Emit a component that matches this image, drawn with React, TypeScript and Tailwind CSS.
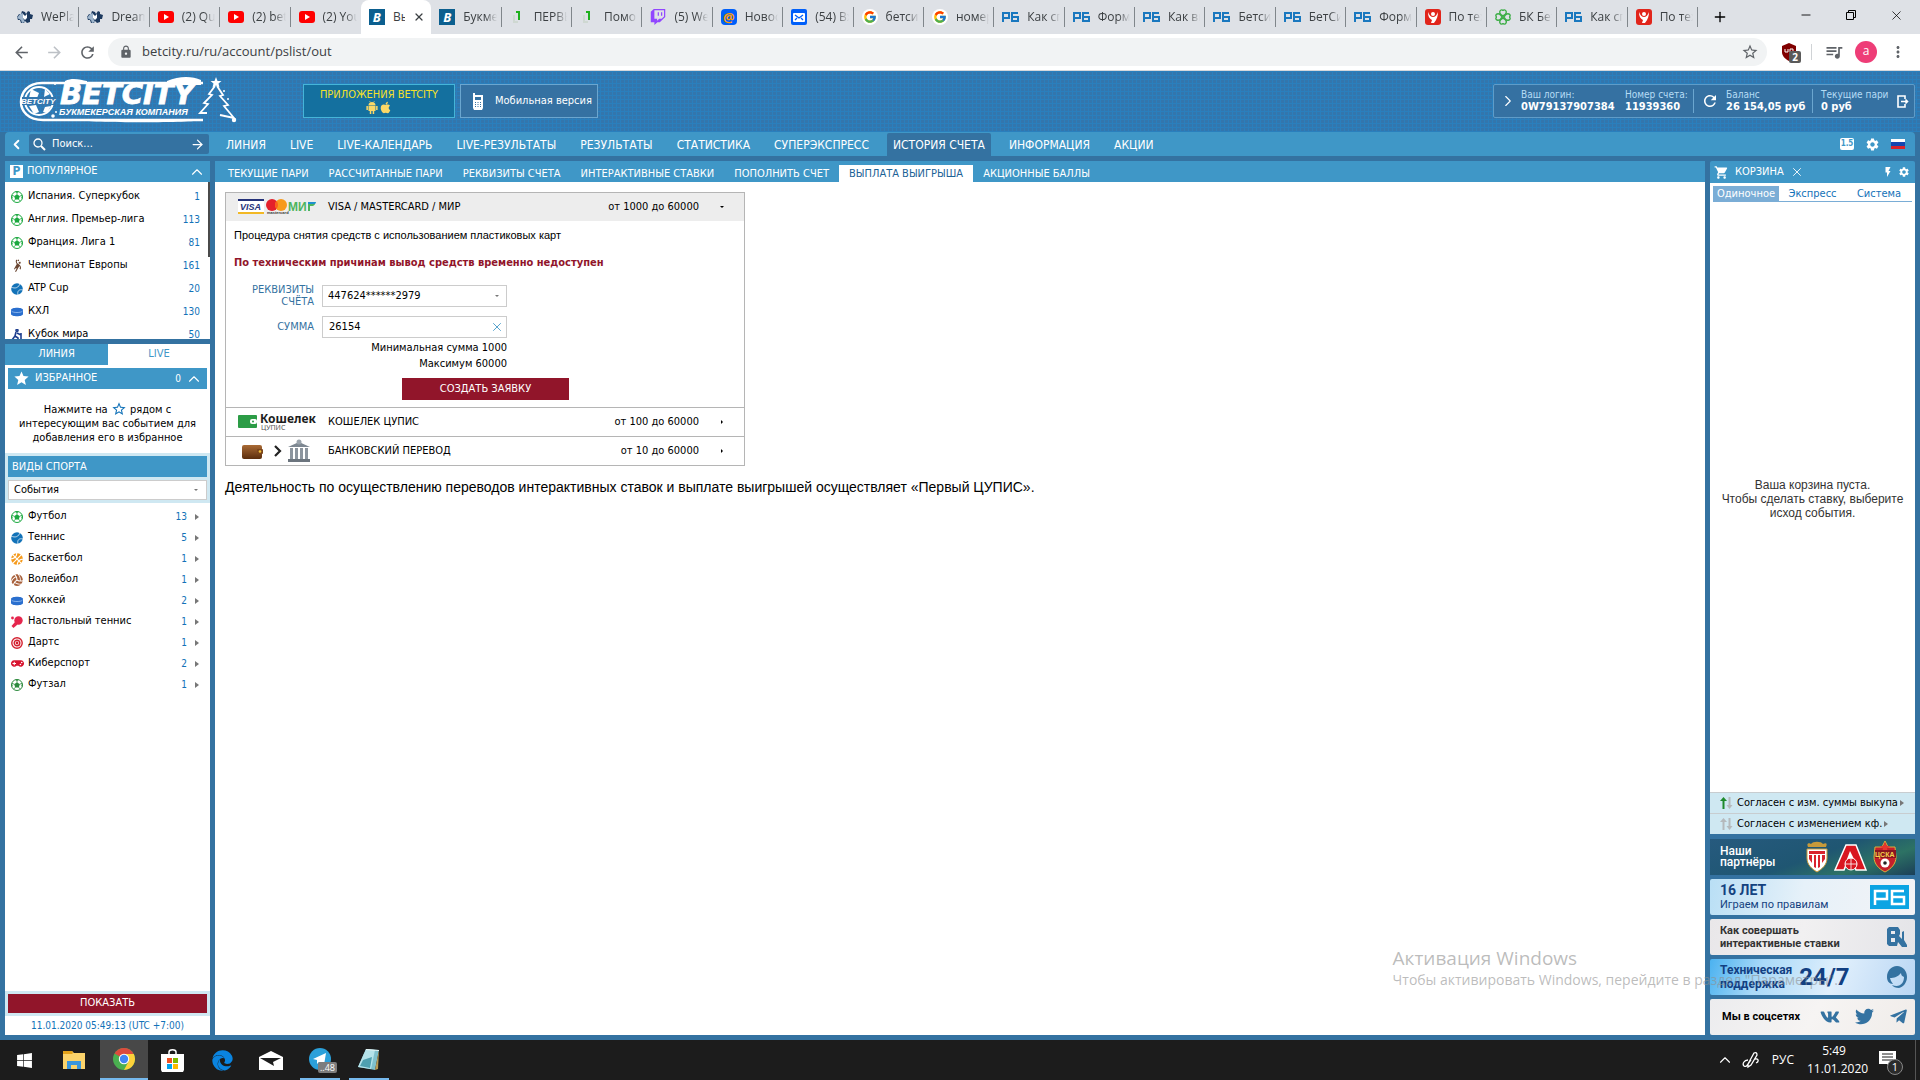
import React from 'react'
import {
    FaApple, FaBasketballBall, FaEdge, FaGamepad, FaTableTennis,
    FaTelegramPlane, FaTwitter, FaVk, FaVolleyballBall, FaWindows, FaTwitch,
} from 'react-icons/fa'
import { FcGoogle } from 'react-icons/fc'
import {
    MdArrowBack, MdArrowForward, MdFlashOn, MdLock, MdMoreVert, MdQueueMusic,
    MdRefresh, MdSettings, MdShoppingCart, MdSportsHandball, MdStar, MdStarBorder,
} from 'react-icons/md'
import { ChevronLeft, ChevronRight, ChevronUp, Plus, X, ArrowRight, Minus } from 'lucide-react'

/* ---------- favicons ---------- */

const Paw = () => (
    <svg width="16" height="16" viewBox="0 0 16 16">
        <path d="M0 8l2-3 2 0 1-3 3 1 1 2 2-3 2 1 0 2 3 1-1 4-2 0 0 3-3 1-2-2-1 2-3 0-1-3-2 0z" fill="#1d3a5f" />
        <path d="M0 9l3-4 3-1 0 5 2 4-3 1-1-3z" fill="#9fb6cd" />
        <path d="M6 5l2 2 2-2 0 4-2 2-2-2z" fill="#fff" />
    </svg>
)
const YouTube = () => (
    <svg width="16" height="16" viewBox="0 0 16 16">
        <rect y="2" width="16" height="12" rx="3" fill="#f00" />
        <path d="M6 5l5 3-5 3z" fill="#fff" />
    </svg>
)
const BetB = () => (
    <span className="flex h-4 w-4 items-center justify-center bg-[#0b5f8f] text-[13px] leading-4 font-bold text-white italic">B</span>
)
const One = () => (
    <svg width="16" height="16" viewBox="0 0 16 16">
        <path d="M6 2h4v9H8V4H6z" fill="#1fb11f" />
        <path d="M4 6v7h4" fill="none" stroke="#cfd8d2" strokeWidth="2" />
    </svg>
)
const MailAt = () => (
    <span className="flex h-4 w-4 items-center justify-center rounded-sm bg-[#005ff9] text-[13px] leading-4 font-bold text-[#ff9e00]">@</span>
)
const Mail = () => (
    <svg width="16" height="16" viewBox="0 0 16 16">
        <rect width="16" height="16" rx="2" fill="#005ff9" />
        <rect x="2" y="4" width="12" height="9" rx="1" fill="#fff" />
        <path d="M4 6l4 3 4-3M4 11l2-2M12 11l-2-2" fill="none" stroke="#005ff9" strokeWidth="1.3" />
    </svg>
)
const Google = () => (
    <span className="flex h-4 w-4 items-center justify-center rounded-full bg-white"><FcGoogle size={14} /></span>
)
const Rb = () => (
    <svg width="17" height="16" viewBox="0 0 17 16" fill="none" stroke="#1a78bf" strokeWidth="2">
        <path d="M1 13V4h6v5H1M16 4h-6v8h6V8h-6" />
    </svg>
)
const Red = () => (
    <svg width="16" height="16" viewBox="0 0 16 16">
        <rect width="16" height="16" rx="3" fill="#e1251b" />
        <circle cx="8" cy="5" r="2" fill="#fff" />
        <path d="M3 3c0 5 2 7 4 8l-1 3h3c3-4 4-7 4-11-1 3-3 5-5 5S4 6 3 3z" fill="#fff" />
    </svg>
)
const Clover = () => (
    <svg width="16" height="16" viewBox="0 0 16 16" fill="none" stroke="#3fae49" strokeWidth="1.4">
        <path d="M8 7C6 6 4 4 5 2s3-1 3 0c0-1 2-2 3 0s-1 4-3 5zM8 9c-2 1-4 3-3 5s3 1 3 0c0 1 2 2 3 0s-1-4-3-5zM7 8C6 6 4 4 2 5s-1 3 0 3c-1 0-2 2 0 3s4-1 5-3zM9 8c1-2 3-4 5-3s1 3 0 3c1 0 2 2 0 3s-4-1-5-3z" />
    </svg>
)
const Twitch = () => <FaTwitch size={16} color="#9146ff" />

const tabs = [
    { icon: Paw, title: 'WePlay' },
    { icon: Paw, title: 'DreamH' },
    { icon: YouTube, title: '(2) Que' },
    { icon: YouTube, title: '(2) betc' },
    { icon: YouTube, title: '(2) You' },
    { icon: BetB, title: 'Вы', active: true },
    { icon: BetB, title: 'Букмек' },
    { icon: One, title: 'ПЕРВЫ' },
    { icon: One, title: 'Помощ' },
    { icon: Twitch, title: '(5) We' },
    { icon: MailAt, title: 'Новос' },
    { icon: Mail, title: '(54) Вх' },
    { icon: Google, title: 'бетсит' },
    { icon: Google, title: 'номер' },
    { icon: Rb, title: 'Как сп' },
    { icon: Rb, title: 'Форма' },
    { icon: Rb, title: 'Как вы' },
    { icon: Rb, title: 'Бетсит' },
    { icon: Rb, title: 'БетСит' },
    { icon: Rb, title: 'Форма' },
    { icon: Red, title: 'По тех' },
    { icon: Clover, title: 'БК Бет' },
    { icon: Rb, title: 'Как сп' },
    { icon: Red, title: 'По тех' },
]

const BrowserChrome = () => (
    <div className="font-['Open_Sans',sans-serif]">
        <div className="flex h-[34px] bg-[#dee1e6] pl-[9px] text-xs text-[#3c4043]">
            <div className="flex min-w-0 flex-1">
                {tabs.map(({ icon: Icon, title, active }, i) => (
                    <div key={i} className={active
                        ? 'flex min-w-0 flex-1 items-center rounded-t-lg bg-white pl-2'
                        : 'flex min-w-0 flex-1 items-center py-[7px] pl-2'}>
                        <span className="mr-2 shrink-0"><Icon /></span>
                        <span className={active
                            ? 'mr-2 w-3 overflow-hidden whitespace-nowrap'
                            : 'mr-1 flex-1 overflow-hidden whitespace-nowrap [mask-image:linear-gradient(to_right,black_65%,transparent)]'}>{title}</span>
                        {active
                            ? <button aria-label="Закрыть вкладку"><X size={12} strokeWidth={2.5} /></button>
                            : i !== 4 && <span className="h-5 w-px shrink-0 bg-[#80868b]" />}
                    </div>
                ))}
            </div>
            <div className="flex w-[222px] items-center justify-between pr-4 pl-[14px] text-black">
                <button aria-label="Новая вкладка"><Plus size={16} /></button>
                <div className="flex items-center gap-8 pb-1">
                    <button aria-label="Свернуть"><Minus size={14} strokeWidth={1.5} /></button>
                    <button aria-label="Окно">
                        <svg width="12" height="12" viewBox="0 0 12 12" fill="none" stroke="#000">
                            <path d="M1.5 3.5h7v7h-7zM3.5 3V1.5h7v7H9" />
                        </svg>
                    </button>
                    <button aria-label="Закрыть"><X size={15} strokeWidth={1.2} /></button>
                </div>
            </div>
        </div>
        <div className="flex h-[37px] items-center border-b border-[#d5d8dc] bg-white text-[#5f6368]">
            <div className="flex w-[108px] items-center gap-[14px] pl-3">
                <button aria-label="Назад"><MdArrowBack size={19} /></button>
                <button aria-label="Вперёд" className="text-[#bdc1c6]"><MdArrowForward size={19} /></button>
                <button aria-label="Обновить"><MdRefresh size={19} /></button>
            </div>
            <div className="flex h-7 flex-1 items-center rounded-full bg-[#f1f3f4] pr-2 pl-[11px]">
                <MdLock size={14} />
                <input aria-label="Адрес" className="ml-[9px] flex-1 bg-transparent text-[13px] text-[#3c4043] outline-none" defaultValue="betcity.ru/ru/account/pslist/out" />
                <MdStarBorder size={18} />
            </div>
            <div className="flex w-[153px] items-center pl-[14px]">
                <span className="relative flex w-[22px]">
                    <svg width="16" height="18" viewBox="0 0 16 18">
                        <path d="M8 0l7 3v6c0 4-3 7-7 9-4-2-7-5-7-9V3z" fill="#800000" />
                        <path d="M4 6v3h3V6M9 6h3v3H9z" fill="none" stroke="#fff" />
                    </svg>
                    <span className="absolute top-2 left-2 h-3 w-3 rounded-xs bg-[#5a5a5a] text-center text-[10px] leading-3 font-bold text-white">2</span>
                </span>
                <span className="mr-3 ml-2 h-4 w-px bg-[#d0d3d6]" />
                <MdQueueMusic size={20} />
                <span className="ml-[11px] h-[22px] w-[22px] rounded-full bg-[#ee3d77] text-center text-xs leading-5 text-white">a</span>
                <MdMoreVert size={18} className="ml-3" />
            </div>
        </div>
    </div>
)

/* ---------- site header ---------- */

const Logo = () => (
    <svg width="222" height="50" viewBox="0 0 222 50">
        <g fill="none" stroke="#fff" strokeWidth="2.5">
            <path d="M186 8H25C10 8 4 18 4 27s7 18 22 18h160" />
            <circle cx="22" cy="26" r="14" strokeWidth="2" />
            <path d="M190 38h-7l8-9-4-1 8-8-3-1 6-8M200 11l6 9-3 1 8 9-4 1 10 12-14-3" strokeWidth="1.8" />
        </g>
        <path d="M14 14l8 4-2 5h-8zM28 14l5 5-6 3zM12 31l7-1 3 7-5 2zM28 32l6-1-4 7-4-1z" fill="#fff" />
        <path d="M48 6c8-4 16-1 22 0v3H48zM150 6c12-5 25-5 34-1v5h-34zM60 44h80l40 1c4 3-110 3-120 0z" fill="#fff" />
        <path d="M199 2l1.5 4h4l-3 2.5 1 4-3.5-2-3.5 2 1-4-3-2.5h4z" fill="#fff" />
        <g fill="#fff">
            <circle cx="38" cy="9" r="1" /><circle cx="207" cy="16" r="1" /><circle cx="211" cy="24" r="1" />
            <circle cx="217" cy="45" r="2.2" /><circle cx="36" cy="41" r="1.8" /><circle cx="39" cy="37" r="1" />
        </g>
        <rect x="5" y="22" width="34" height="8" fill="#3376ad" />
        <text x="4" y="29" fill="#fff" fontSize="8" fontWeight="700" fontStyle="italic" fontFamily="Liberation Sans">BETCITY</text>
        <text x="43" y="29" fill="#fff" stroke="#fff" strokeWidth=".8" fontSize="29" fontWeight="700" fontStyle="italic" fontFamily="DejaVu Sans">BETCITY</text>
        <text x="42" y="40" fill="#fff" fontSize="9" fontWeight="700" fontStyle="italic" fontFamily="Liberation Sans">БУКМЕКЕРСКАЯ КОМПАНИЯ</text>
    </svg>
)

const Android = () => (
    <svg width="12" height="13" viewBox="0 0 12 13" fill="#fbd867">
        <path d="M2.5 4C2.5 0 9.500 0 9.500 4zM2.500 4.600h7V10h-7zM.4 5h1.500v4H.4zM10.100 5h1.500v4h-1.500zM3.800 10h1.500v3H3.800zM6.700 10h1.500v3H6.700z" />
        <path d="M3.500 0l1 1.500M8.500 0l-1 1.500" stroke="#fbd867" strokeWidth=".6" />
    </svg>
)

const Header = () => (
    <header className="flex h-[61px] items-start bg-[#3376ad] bg-[linear-gradient(#2a7fbd_1px,transparent_1px),linear-gradient(90deg,#2a7fbd_1px,transparent_1px)] bg-size-[4px_4px] pr-[5px] pl-[17px] text-[11px] text-white">
        <a href="#" aria-label="Betcity" className="w-[286px] pt-1"><Logo /></a>
        <div className="flex flex-1 gap-[5px] pt-[13px]">
            <button className="flex h-[34px] w-[152px] flex-col items-center justify-center border border-[#45b5d8] bg-[#14709f] leading-3 text-[#f5e02a]">
                ПРИЛОЖЕНИЯ BETCITY
                <span className="flex gap-px text-[#fbd867]"><Android /><FaApple size={13} /></span>
            </button>
            <button className="flex h-[34px] w-[138px] items-center gap-[11px] border border-[#6ba6cf] bg-[#3571a2] pl-[11px] whitespace-nowrap">
                <svg width="12" height="17" viewBox="0 0 12 17">
                    <path d="M1 0h2v2h8v13l-1 2H2l-1-2z" fill="#fff" />
                    <path d="M3 4h6v3H3zM3 9h1v1H3zM5.5 9h1v1h-1zM8 9h1v1H8zM3 11h1v1H3zM5.5 11h1v1h-1zM8 11h1v1H8zM3 13h1v1H3zM5.5 13h1v1h-1zM8 13h1v1H8z" fill="#3571a2" />
                </svg>
                Мобильная версия
            </button>
        </div>
        <div className="mt-[13px] flex h-[34px] items-center rounded-xs border border-[#5f9cc8] bg-[#3571a2] px-[5px] leading-3">
            <ChevronRight size={18} strokeWidth={1.5} />
            <div className="ml-1 w-[104px]"><div className="text-[10px] text-[#b5dcf5]">Ваш логин:</div><b>0W79137907384</b></div>
            <div className="w-[69px] border-r border-[#6ba6cf]"><div className="text-[10px] whitespace-nowrap text-[#b5dcf5]">Номер счета:</div><b>11939360</b></div>
            <button aria-label="Обновить баланс" className="mx-[7px]"><MdRefresh size={18} /></button>
            <div className="w-[87px] border-r border-[#6ba6cf]"><div className="text-[10px] text-[#b5dcf5]">Баланс</div><b>26 154,05 руб</b></div>
            <div className="ml-2 w-[76px]"><div className="text-[10px] whitespace-nowrap text-[#b5dcf5]">Текущие пари</div><b>0 руб</b></div>
            <button aria-label="Выход">
                <svg width="12" height="13" viewBox="0 0 12 13" fill="none" stroke="#fff" strokeWidth="1.6">
                    <path d="M8 4V1H1v11h7V9M4 6.5h6M8.5 4.5l2 2-2 2" />
                </svg>
            </button>
        </div>
    </header>
)

const menu = ['ЛИНИЯ', 'LIVE', 'LIVE-КАЛЕНДАРЬ', 'LIVE-РЕЗУЛЬТАТЫ', 'РЕЗУЛЬТАТЫ', 'СТАТИСТИКА', 'СУПЕРЭКСПРЕСС', 'ИСТОРИЯ СЧЕТА', 'ИНФОРМАЦИЯ', 'АКЦИИ']
const subMenu = ['ТЕКУЩИЕ ПАРИ', 'РАССЧИТАННЫЕ ПАРИ', 'РЕКВИЗИТЫ СЧЕТА', 'ИНТЕРАКТИВНЫЕ СТАВКИ', 'ПОПОЛНИТЬ СЧЕТ', 'ВЫПЛАТА ВЫИГРЫША', 'АКЦИОННЫЕ БАЛЛЫ']

const MainMenu = () => (
    <nav className="mx-[5px] mb-[5px] flex h-6 items-center rounded-t-sm bg-[#3f97c7] text-xs text-white">
        <button aria-label="Назад" className="w-6 pl-1"><ChevronLeft size={15} strokeWidth={3} /></button>
        <label className="flex h-5 w-[180px] items-center gap-1 rounded-xs bg-[#3472a1] px-1">
            <svg width="13" height="13" viewBox="0 0 13 13" fill="none" stroke="#fff">
                <circle cx="5" cy="5" r="4" strokeWidth="1.3" /><path d="M8 8l4 4" strokeWidth="2" />
            </svg>
            <input aria-label="Поиск" placeholder="Поиск..." className="min-w-0 flex-1 pl-[2px] text-[11px] outline-none placeholder:text-white" />
            <ArrowRight size={15} />
        </label>
        <div className="flex flex-1 items-end self-stretch pl-[5px]">
            {menu.map(item => (
                <a key={item} href="#" className={item === 'ИСТОРИЯ СЧЕТА'
                    ? 'mx-[6px] h-[23px] rounded-t-xs bg-[#3472a1] px-[6px] leading-6 whitespace-nowrap'
                    : 'mx-[6px] h-[23px] px-[6px] leading-6 whitespace-nowrap'}>{item}</a>
            ))}
        </div>
        <div className="flex items-center gap-[11px] pr-[10px]">
            <button className="h-3 w-[14px] rounded-xs bg-white text-[8px] leading-3 font-bold text-[#3f97c7]">1.5</button>
            <button aria-label="Настройки"><MdSettings size={15} /></button>
            <button aria-label="Русский" className="h-[10px] w-[14px] bg-[linear-gradient(#fff_33%,#1546b0_33%,#1546b0_66%,#d8232a_66%)]" />
        </div>
    </nav>
)

/* ---------- sport icons ---------- */

const Football = ({ color = '#1ba83f' }) => (
    <svg width="12" height="12" viewBox="0 0 12 12">
        <circle cx="6" cy="6" r="5.5" fill="#fff" stroke={color} />
        <path d="M6 3.200l2.800 2-1 3.300H4.200l-1-3.300z" fill={color} />
        <path d="M6 3.500V1M8.500 5.300l2.500-1M7.600 8.200l1.700 2M4.400 8.200l-1.700 2M3.500 5.300L1 4.300" stroke={color} strokeWidth=".8" />
        <path d="M4 .5h4L6 2zM.3 4.500L1.800 6l-1 2.200zM11.700 4.500L10.200 6l1 2.200z" fill={color} />
    </svg>
)
const Tennis = () => (
    <svg width="12" height="12" viewBox="0 0 12 12">
        <circle cx="6" cy="6" r="5.8" fill="#1272b8" />
        <path d="M0 4c4 2 8 1 9-4M7 12c-1-4 1-6 5-5" fill="none" stroke="#fff" strokeWidth=".7" />
    </svg>
)
const Puck = () => (
    <svg width="12" height="12" viewBox="0 0 12 12">
        <path d="M0 4c0-3 12-3 12 0v4c0 3-12 3-12 0z" fill="#2a6fce" />
        <path d="M.5 5c1 2 10 2 11 0" fill="none" stroke="#9cc3f2" strokeWidth=".8" />
    </svg>
)
const Skier = () => (
    <svg width="12" height="12" viewBox="0 0 12 12" fill="none" stroke="#1f3f8f" strokeWidth="1.6">
        <circle cx="6" cy="1.5" r="1" /><path d="M5 3L4 7l3 2v3M4 7l-3 4M6 4l4 2M10 4v8" />
    </svg>
)
const TableTennis = () => (
    <svg width="12" height="12" viewBox="0 0 12 12" fill="#e5264d">
        <circle cx="7.5" cy="4.5" r="4.2" /><circle cx="1.5" cy="2" r="1.4" />
        <path d="M4 6l2.500 2.500-4 3.500L.5 10z" />
    </svg>
)
const Darts = () => (
    <svg width="12" height="12" viewBox="0 0 12 12" fill="none" stroke="#d3202f" strokeWidth="1.4">
        <circle cx="6" cy="6" r="5.2" /><circle cx="6" cy="6" r="2.8" /><circle cx="6" cy="6" r=".7" />
    </svg>
)

const popular = [
    { icon: <Football />, name: 'Испания. Суперкубок', count: 1 },
    { icon: <Football />, name: 'Англия. Премьер-лига', count: 113 },
    { icon: <Football />, name: 'Франция. Лига 1', count: 81 },
    { icon: <MdSportsHandball size={13} color="#6b4632" />, name: 'Чемпионат Европы', count: 161 },
    { icon: <Tennis />, name: 'ATP Cup', count: 20 },
    { icon: <Puck />, name: 'КХЛ', count: 130 },
    { icon: <Skier />, name: 'Кубок мира', count: 50 },
]

const sports = [
    { icon: <Football />, name: 'Футбол', count: 13 },
    { icon: <Tennis />, name: 'Теннис', count: 5 },
    { icon: <FaBasketballBall size={12} color="#f59a1c" />, name: 'Баскетбол', count: 1 },
    { icon: <FaVolleyballBall size={12} color="#a8613c" />, name: 'Волейбол', count: 1 },
    { icon: <Puck />, name: 'Хоккей', count: 2 },
    { icon: <TableTennis />, name: 'Настольный теннис', count: 1 },
    { icon: <Darts />, name: 'Дартс', count: 1 },
    { icon: <FaGamepad size={13} color="#d8142f" />, name: 'Киберспорт', count: 2 },
    { icon: <Football color="#2d8a3e" />, name: 'Футзал', count: 1 },
]

const Sidebar = () => (
    <aside className="flex w-[205px] shrink-0 flex-col">
        <div className="flex h-[21px] shrink-0 items-center bg-[#3f97c7] pr-1 pl-[5px] text-white">
            <span className="mr-1 h-[13px] w-[13px] bg-white text-center text-xs leading-[13px] font-bold text-[#3f97c7]">P</span>
            <span className="flex-1">ПОПУЛЯРНОЕ</span>
            <ChevronUp size={18} strokeWidth={1.5} />
        </div>
        <div className="relative h-[157px] shrink-0 overflow-hidden bg-white pt-[3px]">
            {popular.map(item => (
                <a key={item.name} href="#" className="flex h-[23px] items-center pr-[10px] pl-[6px]">
                    <span className="flex w-[17px]">{item.icon}</span>
                    <span className="flex-1">{item.name}</span>
                    <span className="text-[10px] text-[#1272b8]">{item.count}</span>
                </a>
            ))}
            <span className="absolute top-0 right-0 h-[75px] w-[2px] bg-[#4a4a4a]" />
        </div>
        <div className="mt-[5px] flex h-[21px] shrink-0">
            <button className="w-[103px] bg-[#3f97c7] text-white">ЛИНИЯ</button>
            <button className="flex-1 bg-white text-[#3f97c7]">LIVE</button>
        </div>
        <div className="flex flex-1 flex-col bg-white">
            <div className="mx-[3px] mt-[3px] flex h-[21px] items-center bg-[#3f97c7] pr-1 pl-[5px] text-white">
                <MdStar size={17} />
                <span className="ml-[5px] flex-1">ИЗБРАННОЕ</span>
                <span className="mr-1 text-[10px]">0</span>
                <ChevronUp size={18} strokeWidth={1.5} />
            </div>
            <p className="h-16 px-3 pt-3 text-center leading-[14px]">
                Нажмите на <MdStarBorder size={16} className="inline align-bottom text-[#1272b8]" /> рядом с интересующим вас событием для добавления его в избранное
            </p>
            <div className="relative bg-[#cfe8f2] p-[3px]">
                <div className="mb-[3px] h-[21px] bg-[#3f97c7] pl-1 leading-[21px] text-white">ВИДЫ СПОРТА</div>
                <select aria-label="Виды спорта" className="block h-5 w-full appearance-none border border-[#ccc] bg-white pl-[5px]">
                    <option>События</option>
                </select>
                <span className="pointer-events-none absolute right-3 bottom-3 border-x-2 border-t-2 border-x-transparent border-t-[#777]" />
            </div>
            <div className="flex-1 pt-[3px]">
                {sports.map(item => (
                    <a key={item.name} href="#" className="flex h-[21px] items-center pr-[11px] pl-[6px]">
                        <span className="flex w-[17px]">{item.icon}</span>
                        <span className="flex-1">{item.name}</span>
                        <span className="text-[10px] text-[#1272b8]">{item.count}</span>
                        <span className="ml-2 border-y-[3px] border-l-4 border-y-transparent border-l-[#777]" />
                    </a>
                ))}
            </div>
            <div className="bg-[#cfe8f2] p-[3px]">
                <button className="block h-[19px] w-full bg-[#91152a] text-white">ПОКАЗАТЬ</button>
            </div>
            <div className="h-[19px] text-center text-[10px] leading-5 text-[#1272b8]">11.01.2020 05:49:13 (UTC +7:00)</div>
        </div>
    </aside>
)

/* ---------- payment systems ---------- */

const CardLogos = () => (
    <svg width="78" height="18" viewBox="0 0 78 18">
        <rect y="1" width="26" height="15" fill="#fff" />
        <path d="M0 1h26v2H0z" fill="#26337a" /><path d="M0 14h26v2H0z" fill="#f2b824" />
        <text x="2" y="12" fontSize="9" fontWeight="700" fontStyle="italic" fontFamily="Liberation Sans" fill="#26337a">VISA</text>
        <circle cx="34" cy="7" r="6" fill="#e4202a" /><circle cx="43" cy="7" r="6" fill="#f79a1d" />
        <path d="M38.5 3a6 6 0 010 8 6 6 0 010-8z" fill="#fb5f1d" />
        <text x="29" y="16" fontSize="4" fontWeight="700" fontFamily="Liberation Sans" fill="#333">mastercard</text>
        <text x="50" y="13" fontSize="12" fontWeight="700" fontFamily="Liberation Sans" fill="#4db45e">МИ</text>
        <path d="M70 4h7c1 2-1 4-3 4h-2v5h-2z" fill="#4db45e" /><path d="M70 4h8c0 1-1 2-2 2h-6z" fill="#1f8fd0" />
    </svg>
)
const WalletLogo = () => (
    <svg width="80" height="18" viewBox="0 0 80 18">
        <rect y="2" width="19" height="13" rx="1" fill="#2c9c46" />
        <rect x="12" y="6" width="7" height="5" rx="2" fill="#fff" /><circle cx="15" cy="8.5" r="1" fill="#2c9c46" />
        <text x="22" y="10" fontSize="12" fontWeight="700" fontFamily="Noto Sans" fill="#1d1d1d">Кошелек</text>
        <text x="23" y="17" fontSize="7" fontFamily="Noto Sans" fill="#555">ЦУПИС</text>
    </svg>
)
const BankLogo = () => (
    <svg width="78" height="24" viewBox="0 0 78 24">
        <defs>
            <linearGradient id="leather" x2="0" y2="1"><stop stopColor="#a96a35" /><stop offset="1" stopColor="#5b2d0c" /></linearGradient>
        </defs>
        <rect x="4" y="6" width="20" height="14" rx="2" fill="url(#leather)" />
        <rect x="19" y="10" width="6" height="5" rx="1" fill="#7b451b" /><circle cx="22" cy="12.5" r="1.3" fill="#f3c13a" />
        <path d="M37 7l5 5-5 5" fill="none" stroke="#222" strokeWidth="2.2" />
        <path d="M50 8l11-5 11 5z" fill="#7d8791" /><circle cx="61" cy="3" r="2.5" fill="#9aa3ab" />
        <path d="M52 9h3v11h-3zM57 9h3v11h-3zM62 9h3v11h-3zM67 9h3v11h-3z" fill="#8c959e" />
        <path d="M50 20h22v3H50z" fill="#6c757e" />
    </svg>
)

const AccountForm = () => (
    <form className="px-2 pt-[7px] pb-[7px]" onSubmit={e => e.preventDefault()}>
        <p className="font-['Liberation_Sans',sans-serif] leading-[14px]">Процедура снятия средств с использованием пластиковых карт</p>
        <p className="my-[14px] leading-[14px] font-bold text-[#91152a]">По техническим причинам вывод средств временно недоступен</p>
        <div className="flex items-center gap-2">
            <label htmlFor="card" className="w-20 text-right leading-3 text-[#3472a1]">РЕКВИЗИТЫ СЧЁТА</label>
            <div className="relative">
                <select id="card" className="block h-[22px] w-[185px] appearance-none border border-[#ccc] bg-white pl-[5px] text-[11px]">
                    <option>447624******2979</option>
                </select>
                <span className="pointer-events-none absolute top-[10px] right-2 border-x-2 border-t-2 border-x-transparent border-t-[#777]" />
            </div>
        </div>
        <div className="mt-2 flex items-center gap-2">
            <label htmlFor="amount" className="w-20 text-right text-[#3472a1]">СУММА</label>
            <div className="flex h-[22px] w-[185px] items-center border border-[#ccc] pr-[2px]">
                <input id="amount" defaultValue="26154" className="min-w-0 flex-1 pl-[6px] outline-none" />
                <button type="button" aria-label="Очистить" className="text-[#3f97c7]"><X size={14} strokeWidth={1.5} /></button>
            </div>
        </div>
        <div className="w-[273px] pt-[2px] text-right leading-4">
            <p>Минимальная сумма 1000</p>
            <p>Максимум 60000</p>
        </div>
        <button className="mt-[6px] ml-[168px] block h-[22px] w-[167px] bg-[#91152a] text-white">СОЗДАТЬ ЗАЯВКУ</button>
    </form>
)

const systems = [
    { logo: <CardLogos />, name: 'VISA / MASTERCARD / МИР', limits: 'от 1000 до 60000', open: true },
    { logo: <WalletLogo />, name: 'КОШЕЛЕК ЦУПИС', limits: 'от 100 до 60000' },
    { logo: <BankLogo />, name: 'БАНКОВСКИЙ ПЕРЕВОД', limits: 'от 10 до 60000' },
]

const Content = () => (
    <main className="flex min-w-0 flex-1 flex-col bg-white">
        <nav className="flex h-[21px] items-end bg-[#3f97c7] pl-[3px] text-white">
            {subMenu.map(item => (
                <a key={item} href="#" className={item === 'ВЫПЛАТА ВЫИГРЫША'
                    ? 'h-[17px] bg-white px-[10px] leading-[18px] text-[#1c6296]'
                    : 'h-[17px] px-[10px] leading-[18px]'}>{item}</a>
            ))}
        </nav>
        <div className="p-[10px]">
            <div className="w-[520px] border border-[#b5b5b5]">
                {systems.map(item => (
                    <section key={item.name} className="border-b border-[#b5b5b5] last:border-b-0">
                        <button className={item.open
                            ? 'flex h-7 w-full items-center bg-[#ededed] pl-3 text-left'
                            : 'flex h-7 w-full items-center pl-3 text-left'}>
                            <span className="w-[90px]">{item.logo}</span>
                            <span className="flex-1">{item.name}</span>
                            <span>{item.limits}</span>
                            <span className="flex w-[45px] justify-center">
                                {item.open
                                    ? <span className="border-x-2 border-t-2 border-x-transparent border-t-black" />
                                    : <span className="border-y-2 border-l-2 border-y-transparent border-l-black" />}
                            </span>
                        </button>
                        {item.open && <AccountForm />}
                    </section>
                ))}
            </div>
            <p className="mt-[11px] font-['Liberation_Sans',sans-serif] text-[14px] leading-5">Деятельность по осуществлению переводов интерактивных ставок и выплате выигрышей осуществляет «Первый ЦУПИС».</p>
        </div>
    </main>
)

/* ---------- bet slip ---------- */

const Arrows = ({ up }: { up: string }) => (
    <svg width="13" height="12" viewBox="0 0 13 12">
        <path d="M3.5 0L7 4H4.5v8h-2V4H0z" fill={up} />
        <path d="M9.5 12L6.5 8h2V0h2v8h2z" fill="#b5b9bc" />
    </svg>
)
const Crests = () => (
    <svg width="92" height="32" viewBox="0 0 92 32">
        <path d="M3 6c-2-5 2-4 3-3 2-3 10-3 12 0 2-1 5-2 3 3z" fill="#c79a3a" />
        <path d="M2 8h20v9c0 7-5 11-10 14C7 28 2 24 2 17z" fill="#fff" stroke="#c79a3a" />
        <path d="M4 10h16v3H4zM4 14h3v8l-3-4zM9 14h2v13l-2-1zM13 14h2v12l-2 1zM17 14h3v4l-3 4z" fill="#d9232e" />
        <path d="M41 4h10l10 25H51l-2-5h-8l-2 5h-9z" fill="#d9161f" stroke="#fff" strokeWidth="1.5" />
        <path d="M45 10l4 8h-7z" fill="#fff" />
        <circle cx="46" cy="23" r="6" fill="#d9161f" stroke="#fff" />
        <path d="M40 23h12M46 17v12" stroke="#fff" strokeWidth=".8" />
        <path d="M80 0l3 6h7l1 10c0 7-5 12-11 15-6-3-11-8-11-15l1-10h7z" fill="#c5202b" stroke="#d9b13c" />
        <path d="M80 1l1.5 4h4L82 7.5 83 11l-3-2-3 2 1-3.500L74.500 5h4z" fill="#e8362f" />
        <rect x="70" y="9" width="21" height="8" fill="#8a1520" />
        <text x="70" y="16" fontSize="7" fontWeight="700" fontFamily="Liberation Sans" fill="#f5d34c">ЦСКА</text>
        <circle cx="80" cy="22" r="4.5" fill="#fff" /><circle cx="80" cy="22" r="1.8" fill="#222" />
    </svg>
)

const Banners = () => (
    <div className="mt-[5px] flex flex-col gap-1 font-['Roboto',sans-serif]">
        <a href="#" className="flex h-9 items-center justify-between bg-[linear-gradient(160deg,#265a7e_0%,#1f5672_50%,#2d7264_75%,#1b3f58_100%)] pr-[18px] pl-[10px] text-xs leading-[11px] font-medium text-white">
            <span>Наши<br />партнёры</span><Crests />
        </a>
        <a href="#" className="flex h-9 items-center justify-between rounded-xs bg-[linear-gradient(100deg,#b9dff5,#e6f1f9_45%,#f3f3f6)] pr-[6px] pl-[10px] text-[#14427f]">
            <span className="text-[11px] leading-[13px]"><b className="text-sm leading-[13px]">16 ЛЕТ</b><br />Играем по правилам</span>
            <svg width="39" height="24" viewBox="0 0 39 24">
                <rect width="39" height="24" fill="#0ba4e3" />
                <path d="M5 20V6h12v8H5M34 6H22v13h12v-7H22" fill="none" stroke="#fff" strokeWidth="2.5" />
            </svg>
        </a>
        <a href="#" className="flex h-9 items-center justify-between rounded-xs bg-[linear-gradient(100deg,#e9e7e9,#f1f0f1_45%,#e4e4e8)] pr-2 pl-[10px] text-[11px] leading-[13px] font-bold text-[#333]">
            <span>Как совершать<br />интерактивные ставки</span>
            <svg width="20" height="20" viewBox="0 0 20 20">
                <path d="M0 2l2-2h9l2 3v4l-1 2 3 3V5l2-1v9l3 5v2h-5l-4-5-1 4H2l-2-2z" fill="#3472a1" />
                <path d="M4 4h4v3H4zM4 11h4v4H4z" fill="#eaeaee" />
            </svg>
        </a>
        <a href="#" className="flex h-9 items-center rounded-xs bg-[linear-gradient(110deg,#4bb2f0,#a9d9f8_25%,#e0effc_60%,#b9d6f4)] pr-2 pl-[10px] text-xs leading-[14px] font-bold text-[#123f82]">
            <span>Техническая<br />поддержка</span>
            <span className="ml-[7px] flex-1 text-2xl">24/7</span>
            <svg width="20" height="22" viewBox="0 0 20 22">
                <path d="M10 0c6 0 10 5 10 11s-4 10-8 11c-3 0-6-1-7-3 8 3 12-2 12-8-2-1-3-2-3-4-3 4-7 5-11 5l1 3 2 3C2 18 0 15 0 11 0 5 4 0 10 0z" fill="#3472a1" />
            </svg>
        </a>
        <div className="flex h-9 items-center rounded-xs bg-[linear-gradient(120deg,#ececee,#f6f4f3_50%,#f0ece9)] pr-[7px] pl-3 text-[11px] font-bold text-black">
            <span className="flex-1 whitespace-nowrap">Мы в соцсетях</span>
            <span className="flex gap-[15px] text-[#3472a1]">
                <a href="#" aria-label="ВКонтакте"><FaVk size={20} /></a>
                <a href="#" aria-label="Twitter"><FaTwitter size={19} /></a>
                <a href="#" aria-label="Telegram"><FaTelegramPlane size={19} /></a>
            </span>
        </div>
    </div>
)

const BetSlip = () => (
    <aside className="flex w-[205px] shrink-0 flex-col">
        <div className="flex h-[22px] items-center rounded-t-xs bg-[#3f97c7] pr-[5px] pl-1 text-white">
            <MdShoppingCart size={15} />
            <span className="mr-[6px] ml-[6px]">КОРЗИНА</span>
            <button aria-label="Очистить корзину"><X size={14} strokeWidth={1.5} /></button>
            <span className="flex-1" />
            <button aria-label="Быстрая ставка" className="mr-1"><MdFlashOn size={12} /></button>
            <button aria-label="Настройки"><MdSettings size={12} /></button>
        </div>
        <div className="flex flex-1 flex-col bg-white px-[3px] pt-[3px]">
            <div className="flex h-4 border-b border-[#7aadd6] text-[#1272b8]">
                <button className="w-[66px] shrink-0 bg-[#7aadd6] text-white">Одиночное</button>
                <button className="w-[67px]">Экспресс</button>
                <button className="flex-1">Система</button>
            </div>
            <p className="flex flex-1 items-center justify-center pt-1 text-center font-['Liberation_Sans',sans-serif] text-xs leading-[14px] text-[#333]">
                <span>Ваша корзина пуста.<br />Чтобы сделать ставку, выберите исход события.</span>
            </p>
        </div>
        <button className="flex h-[21px] items-center border-t border-[#c8cdd0] bg-[#cfe8f2] pl-[10px] whitespace-nowrap">
            <Arrows up="#1f8a2c" /><span className="ml-1">Согласен с изм. суммы выкупа</span>
            <span className="ml-[2px] border-y-[3px] border-l-4 border-y-transparent border-l-[#777]" />
        </button>
        <button className="flex h-[21px] items-center border-t border-[#c8cdd0] bg-[#cfe8f2] pl-[10px] whitespace-nowrap">
            <Arrows up="#b5b9bc" /><span className="ml-1">Согласен с изменением кф.</span>
            <span className="ml-[2px] border-y-[3px] border-l-4 border-y-transparent border-l-[#777]" />
        </button>
        <Banners />
    </aside>
)

/* ---------- windows taskbar ---------- */

const Folder = () => (
    <svg width="22" height="18" viewBox="0 0 22 18">
        <path d="M0 0h9l2 2h11v16H0z" fill="#fbd36b" /><path d="M0 0h9l1 2-1 1H0z" fill="#e3a21a" />
        <path d="M4 10h14v8h-4v-4H8v4H4z" fill="#3a96dd" />
    </svg>
)
const Chrome = () => (
    <svg width="22" height="22" viewBox="0 0 22 22">
        <circle cx="11" cy="11" r="11" fill="#4aaf50" />
        <path d="M11 11L1.5 5.5A11 11 0 0120.5 5.5z" fill="#dc4a3d" />
        <path d="M11 6h9.800A11 11 0 0111 22l4.500-8.500z" fill="#fdd13a" />
        <circle cx="11" cy="11" r="5.2" fill="#fff" /><circle cx="11" cy="11" r="4.2" fill="#4285f4" />
    </svg>
)
const Store = () => (
    <svg width="23" height="23" viewBox="0 0 23 23">
        <path d="M8 6V3c0-3 7-3 7 0v3" fill="none" stroke="#fff" strokeWidth="1.5" />
        <path d="M0 5h23v16l-1 2H1l-1-2z" fill="#fff" />
        <path d="M6 9h5v5H6z" fill="#f25022" /><path d="M12 9h5v5h-5z" fill="#7fba00" />
        <path d="M6 15h5v5H6z" fill="#00a4ef" /><path d="M12 15h5v5h-5z" fill="#ffb900" />
    </svg>
)
const MailApp = () => (
    <svg width="24" height="19" viewBox="0 0 24 19">
        <path d="M0 6l12-6 12 6v13H0z" fill="#fff" /><path d="M1 7h21l-8 4 1 4z" fill="#1c1c1c" />
    </svg>
)
const TelegramApp = () => (
    <span className="relative flex">
        <svg width="22" height="22" viewBox="0 0 22 22">
            <circle cx="11" cy="11" r="11" fill="#2ba0da" />
            <path d="M4 11l13-6-2 12-5-3-2 2v-4z" fill="#fff" />
        </svg>
        <span className="absolute top-[14px] left-[9px] rounded-xs bg-[#7d7d7d] px-[2px] text-[9px] leading-[11px] text-white">..48</span>
    </span>
)
const Notepad = () => (
    <svg width="24" height="22" viewBox="0 0 24 22">
        <path d="M9 1l13 1-4 20-17-3z" fill="#7fc0cc" /><path d="M9 1l9 1-4 19-13-2z" fill="#b5e3ea" />
        <path d="M6 12l9-3-2 11-10-2z" fill="#4fa0b0" />
        <path d="M22 2l-1 19-3 1z" fill="#b89a55" /><path d="M9 1l13 1v1L9 2z" fill="#e9f4f4" />
    </svg>
)

const Taskbar = () => (
    <footer className="flex h-10 shrink-0 bg-[#1c1c1c] font-['Open_Sans',sans-serif] text-xs text-white">
        <button aria-label="Пуск" className="flex w-[48px] items-center justify-center"><FaWindows size={17} /></button>
        <button aria-label="Проводник" className="flex w-[52px] items-center justify-center"><Folder /></button>
        <button aria-label="Chrome" className="flex w-12 items-center justify-center border-b-2 border-[#76b9ed] bg-[#484848]"><Chrome /></button>
        <button aria-label="Магазин" className="flex w-12 items-center justify-center"><Store /></button>
        <button aria-label="Edge" className="flex w-[52px] items-center justify-center text-[#0a84e0]"><FaEdge size={21} /></button>
        <button aria-label="Почта" className="flex w-[46px] items-center justify-center"><MailApp /></button>
        <button aria-label="Telegram" className="mx-[6px] flex w-10 items-center justify-center border-b-2 border-[#76b9ed]"><TelegramApp /></button>
        <button aria-label="Блокнот" className="ml-[3px] flex w-10 items-center justify-center border-b-2 border-[#76b9ed]"><Notepad /></button>
        <div className="ml-auto flex items-center">
            <ChevronUp size={18} strokeWidth={1.5} />
            <svg width="18" height="18" viewBox="0 0 18 18" className="mr-3 ml-2" fill="none" stroke="#fff" strokeWidth="1.3">
                <path d="M6 13L12 2c2-1 3 0 3 2L9 14l-3 2zM6 9c-4 0-6 4-4 6 3 2 4-3 7-6M13 8c4-1 4 3 1 4" />
            </svg>
            <span>РУС</span>
            <div className="ml-[13px] w-[54px] text-center leading-[18px]">5:49<br /><span className="whitespace-nowrap">11.01.2020</span></div>
            <span className="relative mr-3 ml-[18px] flex w-[24px]">
                <svg width="17" height="18" viewBox="0 0 17 18">
                    <path d="M0 0h17v13h-5v4l-4-4H0z" fill="#fff" /><path d="M3 3h11M3 6h11M3 9h11" stroke="#1c1c1c" />
                </svg>
                <span className="absolute top-2 left-2 h-4 w-4 rounded-full border border-[#888] bg-[#2b2b2b] text-center text-[11px] leading-[14px]">1</span>
            </span>
            <span className="mr-1 h-10 w-px bg-[#555]" />
        </div>
    </footer>
)

export default function App() {
    return (
        <div className="relative flex h-screen flex-col overflow-hidden bg-[#3472a1] font-['DejaVu_Sans_Condensed','Noto_Sans',sans-serif] text-[11px] text-black">
            <BrowserChrome />
            <Header />
            <MainMenu />
            <div className="flex min-h-0 flex-1 gap-[5px] px-[5px] pb-[5px]">
                <Sidebar />
                <Content />
                <BetSlip />
            </div>
            <Taskbar />
            {/* activation notice lies over everything on screen */}
            <div className="pointer-events-none absolute right-[82px] bottom-[90px] font-['Open_Sans',sans-serif] text-[#8f8f8f]/60">
                <p className="text-[19px] leading-6">Активация Windows</p>
                <p className="text-sm leading-5">Чтобы активировать Windows, перейдите в раздел "Параметры".</p>
            </div>
        </div>
    )
}
